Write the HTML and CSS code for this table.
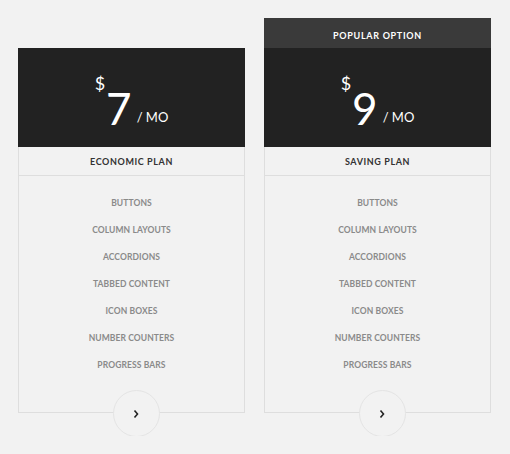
FILE: index.html
```html
<!DOCTYPE html>
<html>
<head>
<meta charset="utf-8">
<link rel="stylesheet" href="styles.css">
</head>
<body>
<div class="plans">
  <div class="card">
    <div class="price">
      <span class="cur">$</span><span class="amt">7</span><span class="per">/ MO</span>
    </div>
    <div class="name">ECONOMIC PLAN</div>
    <ul class="features">
      <li>BUTTONS</li>
      <li>COLUMN LAYOUTS</li>
      <li>ACCORDIONS</li>
      <li>TABBED CONTENT</li>
      <li>ICON BOXES</li>
      <li>NUMBER COUNTERS</li>
      <li>PROGRESS BARS</li>
    </ul>
    <div class="btn-row"><a class="go" href="#"><svg width="8" height="10" viewBox="0 0 8 10"><path d="M2.5 1.5 L5.5 5 L2.5 8.5" fill="none" stroke="#222" stroke-width="1.6"/></svg></a></div>
  </div>
  <div class="card">
    <div class="popular">POPULAR OPTION</div>
    <div class="price">
      <span class="cur">$</span><span class="amt">9</span><span class="per">/ MO</span>
    </div>
    <div class="name">SAVING PLAN</div>
    <ul class="features">
      <li>BUTTONS</li>
      <li>COLUMN LAYOUTS</li>
      <li>ACCORDIONS</li>
      <li>TABBED CONTENT</li>
      <li>ICON BOXES</li>
      <li>NUMBER COUNTERS</li>
      <li>PROGRESS BARS</li>
    </ul>
    <div class="btn-row"><a class="go" href="#"><svg width="8" height="10" viewBox="0 0 8 10"><path d="M2.5 1.5 L5.5 5 L2.5 8.5" fill="none" stroke="#222" stroke-width="1.6"/></svg></a></div>
  </div>
</div>
</body>
</html>
```
FILE: styles.css
```css
html, body {
  margin: 0;
  padding: 0;
  background: #f2f2f2;
  font-family: "Lato", "Liberation Sans", sans-serif;
}
.plans {
  display: flex;
  align-items: flex-end;
  gap: 19px;
  padding: 18px 0 0 18px;
}
.card {
  width: 227px;
  box-sizing: border-box;
  border: 1px solid #dedede;
  border-bottom: none;
  display: flex;
  flex-direction: column;
}
.popular {
  height: 30px;
  box-sizing: border-box;
  padding-top: 4px;
  margin: -1px -1px 0;
  background: #3a3a3a;
  color: #fff;
  font-size: 9px;
  font-weight: 700;
  letter-spacing: 0.7px;
  display: flex;
  align-items: center;
  justify-content: center;
}
.price {
  height: 99px;
  margin: -1px -1px 0;
  background: #222;
  color: #fff;
  display: flex;
  justify-content: center;
  align-items: flex-start;
  box-sizing: border-box;
  padding-top: 26px;
}
.card .popular + .price {
  margin-top: 0;
}
.cur {
  font-size: 18px;
  font-weight: 400;
  line-height: 1;
  margin-right: 1px;
}
.amt {
  font-size: 44px;
  font-weight: 400;
  line-height: 1;
  margin-top: 12px;
}
.per {
  font-size: 13px;
  font-weight: 400;
  margin-top: 37px;
  margin-left: 5px;
  line-height: 1;
}
.name {
  height: 28px;
  border-bottom: 1px solid #dedede;
  display: flex;
  align-items: center;
  justify-content: center;
  font-size: 9px;
  font-weight: 700;
  letter-spacing: 0.6px;
  color: #333;
}
.features {
  list-style: none;
  margin: 0;
  padding: 14px 0 11px;
  text-align: center;
}
.features li {
  line-height: 27px;
  font-size: 8.5px;
  font-weight: 700;
  letter-spacing: 0.1px;
  color: #8a8a8a;
}
.btn-row {
  height: 46px;
  margin: 0 -1px;
  display: flex;
  justify-content: center;
  background: linear-gradient(to bottom, transparent 0, transparent 22px, #dedede 22px, #dedede 23px, #f2f2f2 23px);
}
.go {
  width: 45px;
  height: 45px;
  margin-left: 9px;
  border: 1px solid #e4e4e4;
  border-radius: 50%;
  background: #f2f2f2;
  display: flex;
  align-items: center;
  justify-content: center;
}
```
